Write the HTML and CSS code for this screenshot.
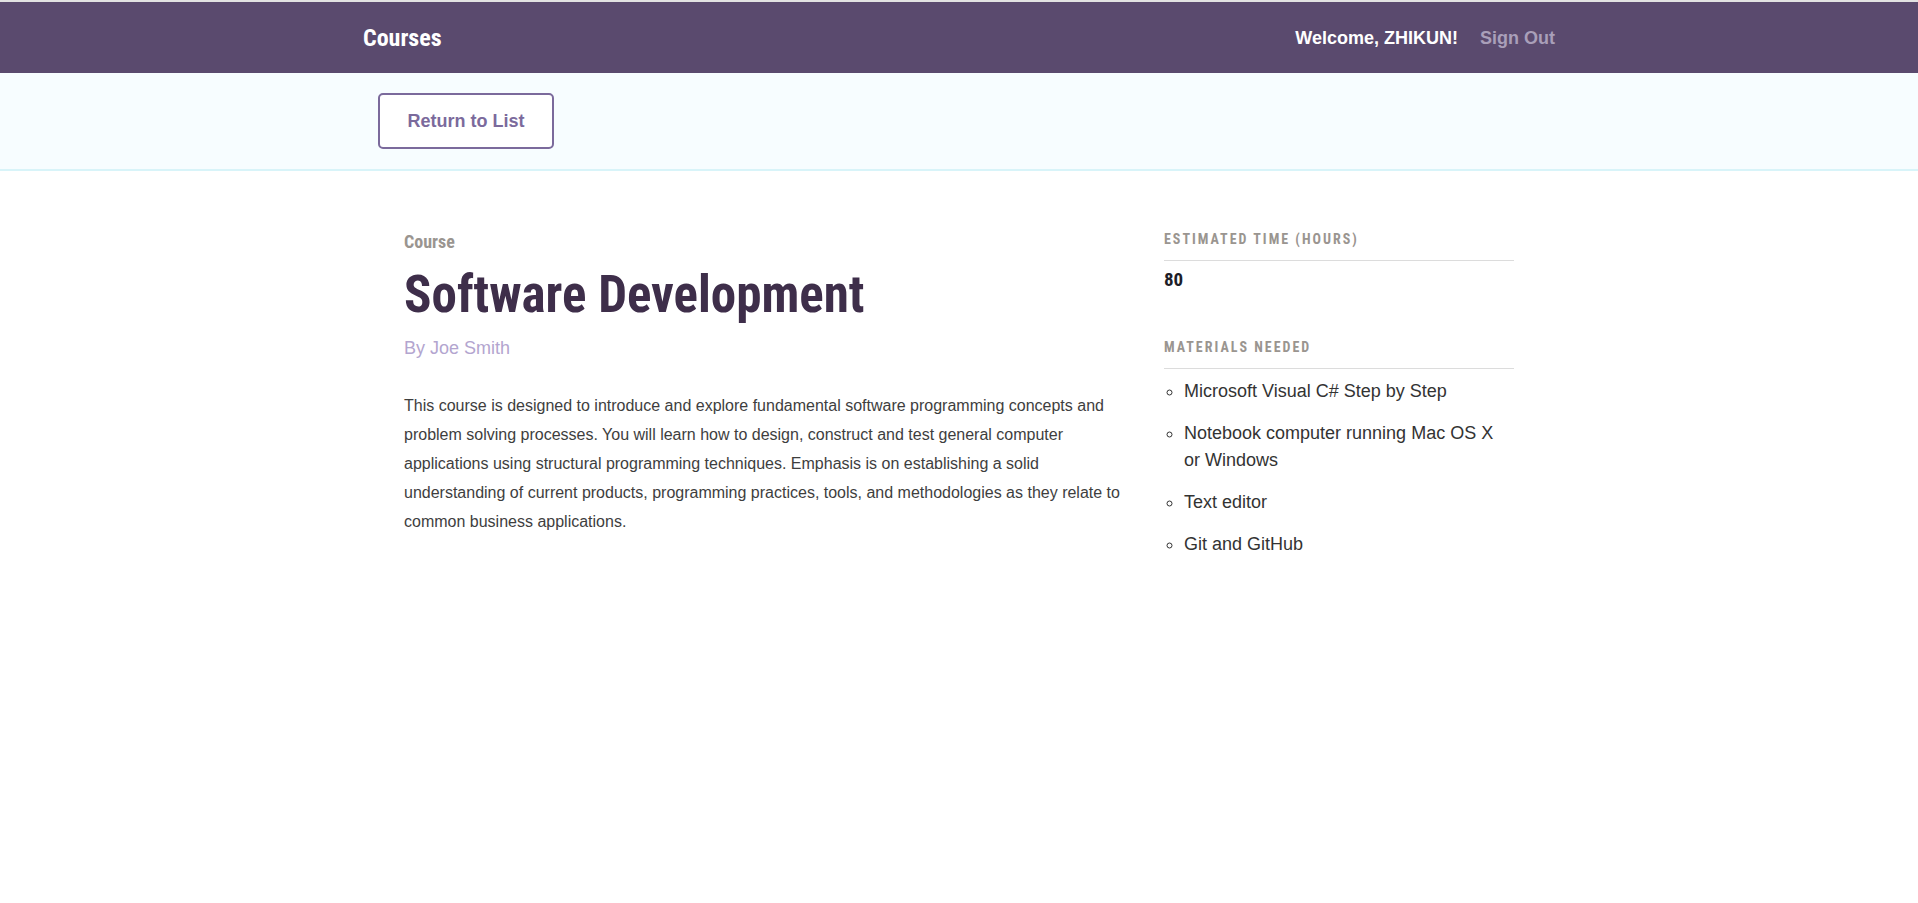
FILE: index.html
```html
<!DOCTYPE html>
<html lang="en">
<head>
<meta charset="utf-8">
<title>Courses</title>
<link rel="stylesheet" href="styles.css">
</head>
<body>
<header class="header">
  <div class="header-bounds">
    <h1 class="header-logo">Courses</h1>
    <nav class="header-nav">
      <span class="welcome">Welcome, ZHIKUN!</span>
      <a class="signout" href="#">Sign Out</a>
    </nav>
  </div>
</header>
<div class="actions-bar">
  <div class="actions-bounds">
    <a class="button-outline" href="#">Return to List</a>
  </div>
</div>
<main class="course-detail">
  <div class="course-main">
    <h4 class="course-label">Course</h4>
    <h3 class="course-title">Software Development</h3>
    <p class="course-author">By Joe Smith</p>
    <div class="course-description">
      <p>This course is designed to introduce and explore fundamental software programming concepts and problem solving processes. You will learn how to design, construct and test general computer applications using structural programming techniques. Emphasis is on establishing a solid understanding of current products, programming practices, tools, and methodologies as they relate to common business applications.</p>
    </div>
  </div>
  <aside class="course-stats">
    <div class="stat">
      <h4 class="stat-label">Estimated Time (Hours)</h4>
      <h3 class="stat-value">80</h3>
    </div>
    <div class="stat">
      <h4 class="stat-label">Materials Needed</h4>
      <ul class="materials">
        <li>Microsoft Visual C# Step by Step</li>
        <li>Notebook computer running Mac OS X or Windows</li>
        <li>Text editor</li>
        <li>Git and GitHub</li>
      </ul>
    </div>
  </aside>
</main>
</body>
</html>
```
FILE: styles.css
```css
* { box-sizing: border-box; }
html, body { margin: 0; padding: 0; }
body {
  font-family: "Liberation Sans", Arial, sans-serif;
  color: #3e3e3e;
  background: #fff;
  border-top: 2px solid #e2e2e2;
}
.header {
  background: #5a4a6e;
  height: 71px;
}
.header-bounds {
  width: 1200px;
  margin: 0 auto;
  height: 100%;
  padding: 0 4px;
  display: flex;
  align-items: center;
  justify-content: space-between;
}
.header-logo,
.course-label,
.course-title,
.stat-label,
.stat-value {
  font-family: "Roboto Condensed", "Noto Sans Condensed", "Open Sans Condensed", "Noto Sans", "DejaVu Sans Condensed", sans-serif;
  font-stretch: 75%;
  font-weight: 700;
}
.header-logo {
  margin: 0;
  font-size: 24px;
  color: #fff;
  padding-top: 1px;
}
.header-nav {
  display: flex;
  align-items: center;
  gap: 22px;
  font-size: 18px;
  font-weight: 700;
  padding-top: 1px;
}
.welcome { color: #fff; }
.signout { color: #a99fb9; text-decoration: none; }
.actions-bar {
  background: #f7fdff;
  border-bottom: 2px solid #d8f4f9;
  padding: 20px 0 20px;
}
.actions-bounds {
  width: 1200px;
  margin: 0 auto;
  padding-left: 19px;
}
.button-outline {
  display: inline-flex;
  align-items: center;
  justify-content: center;
  width: 176px;
  height: 56px;
  border: 2px solid #7b6a9c;
  border-radius: 5px;
  color: #7b6a9c;
  font-size: 18px;
  font-weight: 700;
  text-decoration: none;
  background: #fff;
}
.course-detail {
  width: 1110px;
  margin: 0 auto;
  padding-top: 59px;
  display: flex;
  gap: 40px;
}
.course-main { width: 720px; }
.course-stats { width: 350px; }
.course-label {
  margin: 0;
  font-size: 18px;
  line-height: 24px;
  color: #9a9590;
}
.course-title {
  margin: 11px 0 0;
  font-size: 51px;
  line-height: 60px;
  color: #3e2e4a;
}
.course-author {
  margin: 11px 0 0;
  font-size: 18px;
  line-height: 24px;
  color: #b3a5cf;
}
.course-description p {
  margin: 31px 0 0;
  font-size: 16px;
  line-height: 29px;
  color: #3e3e3e;
}
.stat-label {
  margin: 0;
  font-size: 14px;
  line-height: 18px;
  letter-spacing: 2px;
  text-transform: uppercase;
  color: #9a9590;
  padding-bottom: 12px;
  border-bottom: 1px solid #dcdcdc;
}
.stat-value {
  margin: 7px 0 0;
  font-size: 19px;
  line-height: 24px;
  color: #1e1e28;
}
.stat + .stat { margin-top: 46px; }
.materials {
  margin: 9px 0 0;
  padding-left: 20px;
  list-style: circle;
  font-size: 18px;
  line-height: 27px;
  color: #333;
}
.materials li { margin-bottom: 15px; }
```
